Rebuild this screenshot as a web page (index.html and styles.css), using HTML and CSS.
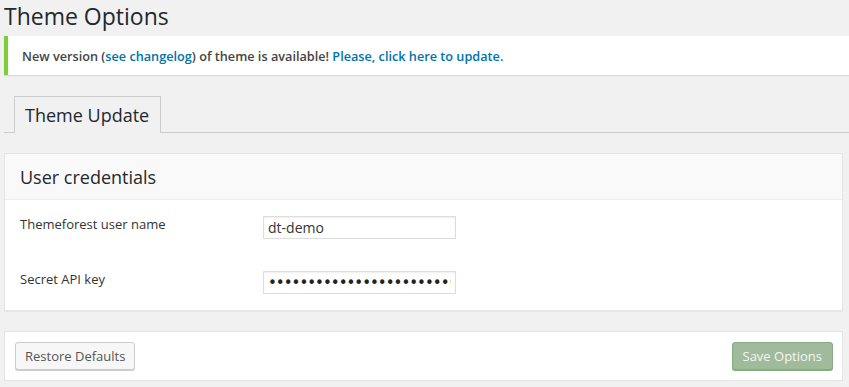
FILE: index.html
```html
<!DOCTYPE html>
<html lang="en">
  <head>
    <meta charset="UTF-8" />
    <title>Theme Options</title>
    <link rel="stylesheet" href="styles.css">
  </head>
  <body>
    <div class="wrap">
      <h1>Theme Options</h1>

      <div class="notice">
        <p>
          New version (<a href="#">see changelog</a>) of theme is available!
          <a href="#">Please, click here to update.</a>
        </p>
      </div>

      <div class="tabs">
        <span class="tab">Theme Update</span>
      </div>

      <div class="box">
        <div class="box-head">
          <h3>User credentials</h3>
        </div>
        <div class="box-body">
          <div class="row">
            <label for="username">Themeforest user name</label>
            <input type="text" id="username" value="dt-demo" />
          </div>
          <div class="row">
            <label for="apikey">Secret API key</label>
            <input type="password" id="apikey" value="abcdefghijklmnopqrstuvwxyz0123456789" />
          </div>
        </div>
      </div>

      <div class="box footer">
        <button class="btn">Restore Defaults</button>
        <button class="btn btn-save">Save Options</button>
      </div>
    </div>
  </body>
</html>
```

FILE: styles.css
```css
/* General styles */
body {
  margin: 0;
  background-color: #f1f1f1;
  font-family: "Open Sans", sans-serif;
  color: #444;
  font-size: 13px;
}

.wrap {
  padding-left: 4px;
}

h1 {
  margin: 0;
  font-size: 23px;
  font-weight: 400;
  line-height: 32px;
  color: #23282d;
}

a {
  color: #0073aa;
  text-decoration: none;
}

/* Update notice */
.notice {
  margin-top: 4px;
  height: 39px;
  background-color: white;
  border-left: 4px solid #7ad03a;
  box-shadow: 0 1px 1px rgba(0, 0, 0, 0.1);
  display: flex;
  align-items: center;
  padding-left: 14px;
}

.notice p {
  margin: 0;
  font-size: 12.7px;
  font-weight: 600;
  color: #444;
}

/* Tabs */
.tabs {
  margin-top: 21px;
  border-bottom: 1px solid #ccc;
  padding-left: 10px;
  display: flex;
}

.tab {
  display: block;
  height: 36px;
  line-height: 36px;
  padding: 0 11px 0 10px;
  border: 1px solid #ccc;
  border-bottom: none;
  margin-bottom: -1px;
  background-color: #f1f1f1;
  font-size: 18px;
  color: #23282d;
}

/* Boxes */
.box {
  margin-top: 20px;
  margin-right: 6px;
  background-color: white;
  border: 1px solid #e5e5e5;
  box-shadow: 0 1px 1px rgba(0, 0, 0, 0.04);
}

.box-head {
  height: 45px;
  background-color: #f9f9f9;
  border-bottom: 1px solid #eee;
  display: flex;
  align-items: center;
  padding-left: 15px;
}

.box-head h3 {
  margin: 0;
  font-size: 18px;
  font-weight: 400;
  color: #23282d;
}

.box-body {
  padding: 16px 0 16px 15px;
  display: flex;
  flex-direction: column;
  gap: 32px;
}

.row {
  display: flex;
  align-items: flex-start;
}

.row label {
  width: 243px;
  line-height: 16px;
  color: #333;
}

.row input {
  width: 183px;
  height: 21px;
  padding: 0 4px;
  margin: 0;
  border: 1px solid #ddd;
  box-shadow: inset 0 1px 2px rgba(0, 0, 0, 0.07);
  font-family: "Open Sans", sans-serif;
  font-size: 14px;
  color: #333;
}

.row input[type="password"] {
  font-family: "DejaVu Sans", sans-serif;
  font-size: 15px;
  letter-spacing: -1px;
  color: #222;
}

.footer {
  margin-top: 20px;
  height: 48px;
  display: flex;
  align-items: center;
  justify-content: space-between;
  padding: 0 9px 0 10px;
}

.btn {
  height: 28px;
  padding: 0 9px;
  border: 1px solid #ccc;
  border-radius: 3px;
  background-color: #f7f7f7;
  box-shadow: 0 1px 0 #ccc;
  font-family: "Open Sans", sans-serif;
  font-size: 13px;
  color: #555;
  white-space: nowrap;
  cursor: pointer;
}

.btn-save {
  padding: 0 10px;
  background-color: #9fbb9c;
  border-color: #89a886;
  box-shadow: 0 1px 0 #89a886;
  color: #f2f7f1;
}
```
